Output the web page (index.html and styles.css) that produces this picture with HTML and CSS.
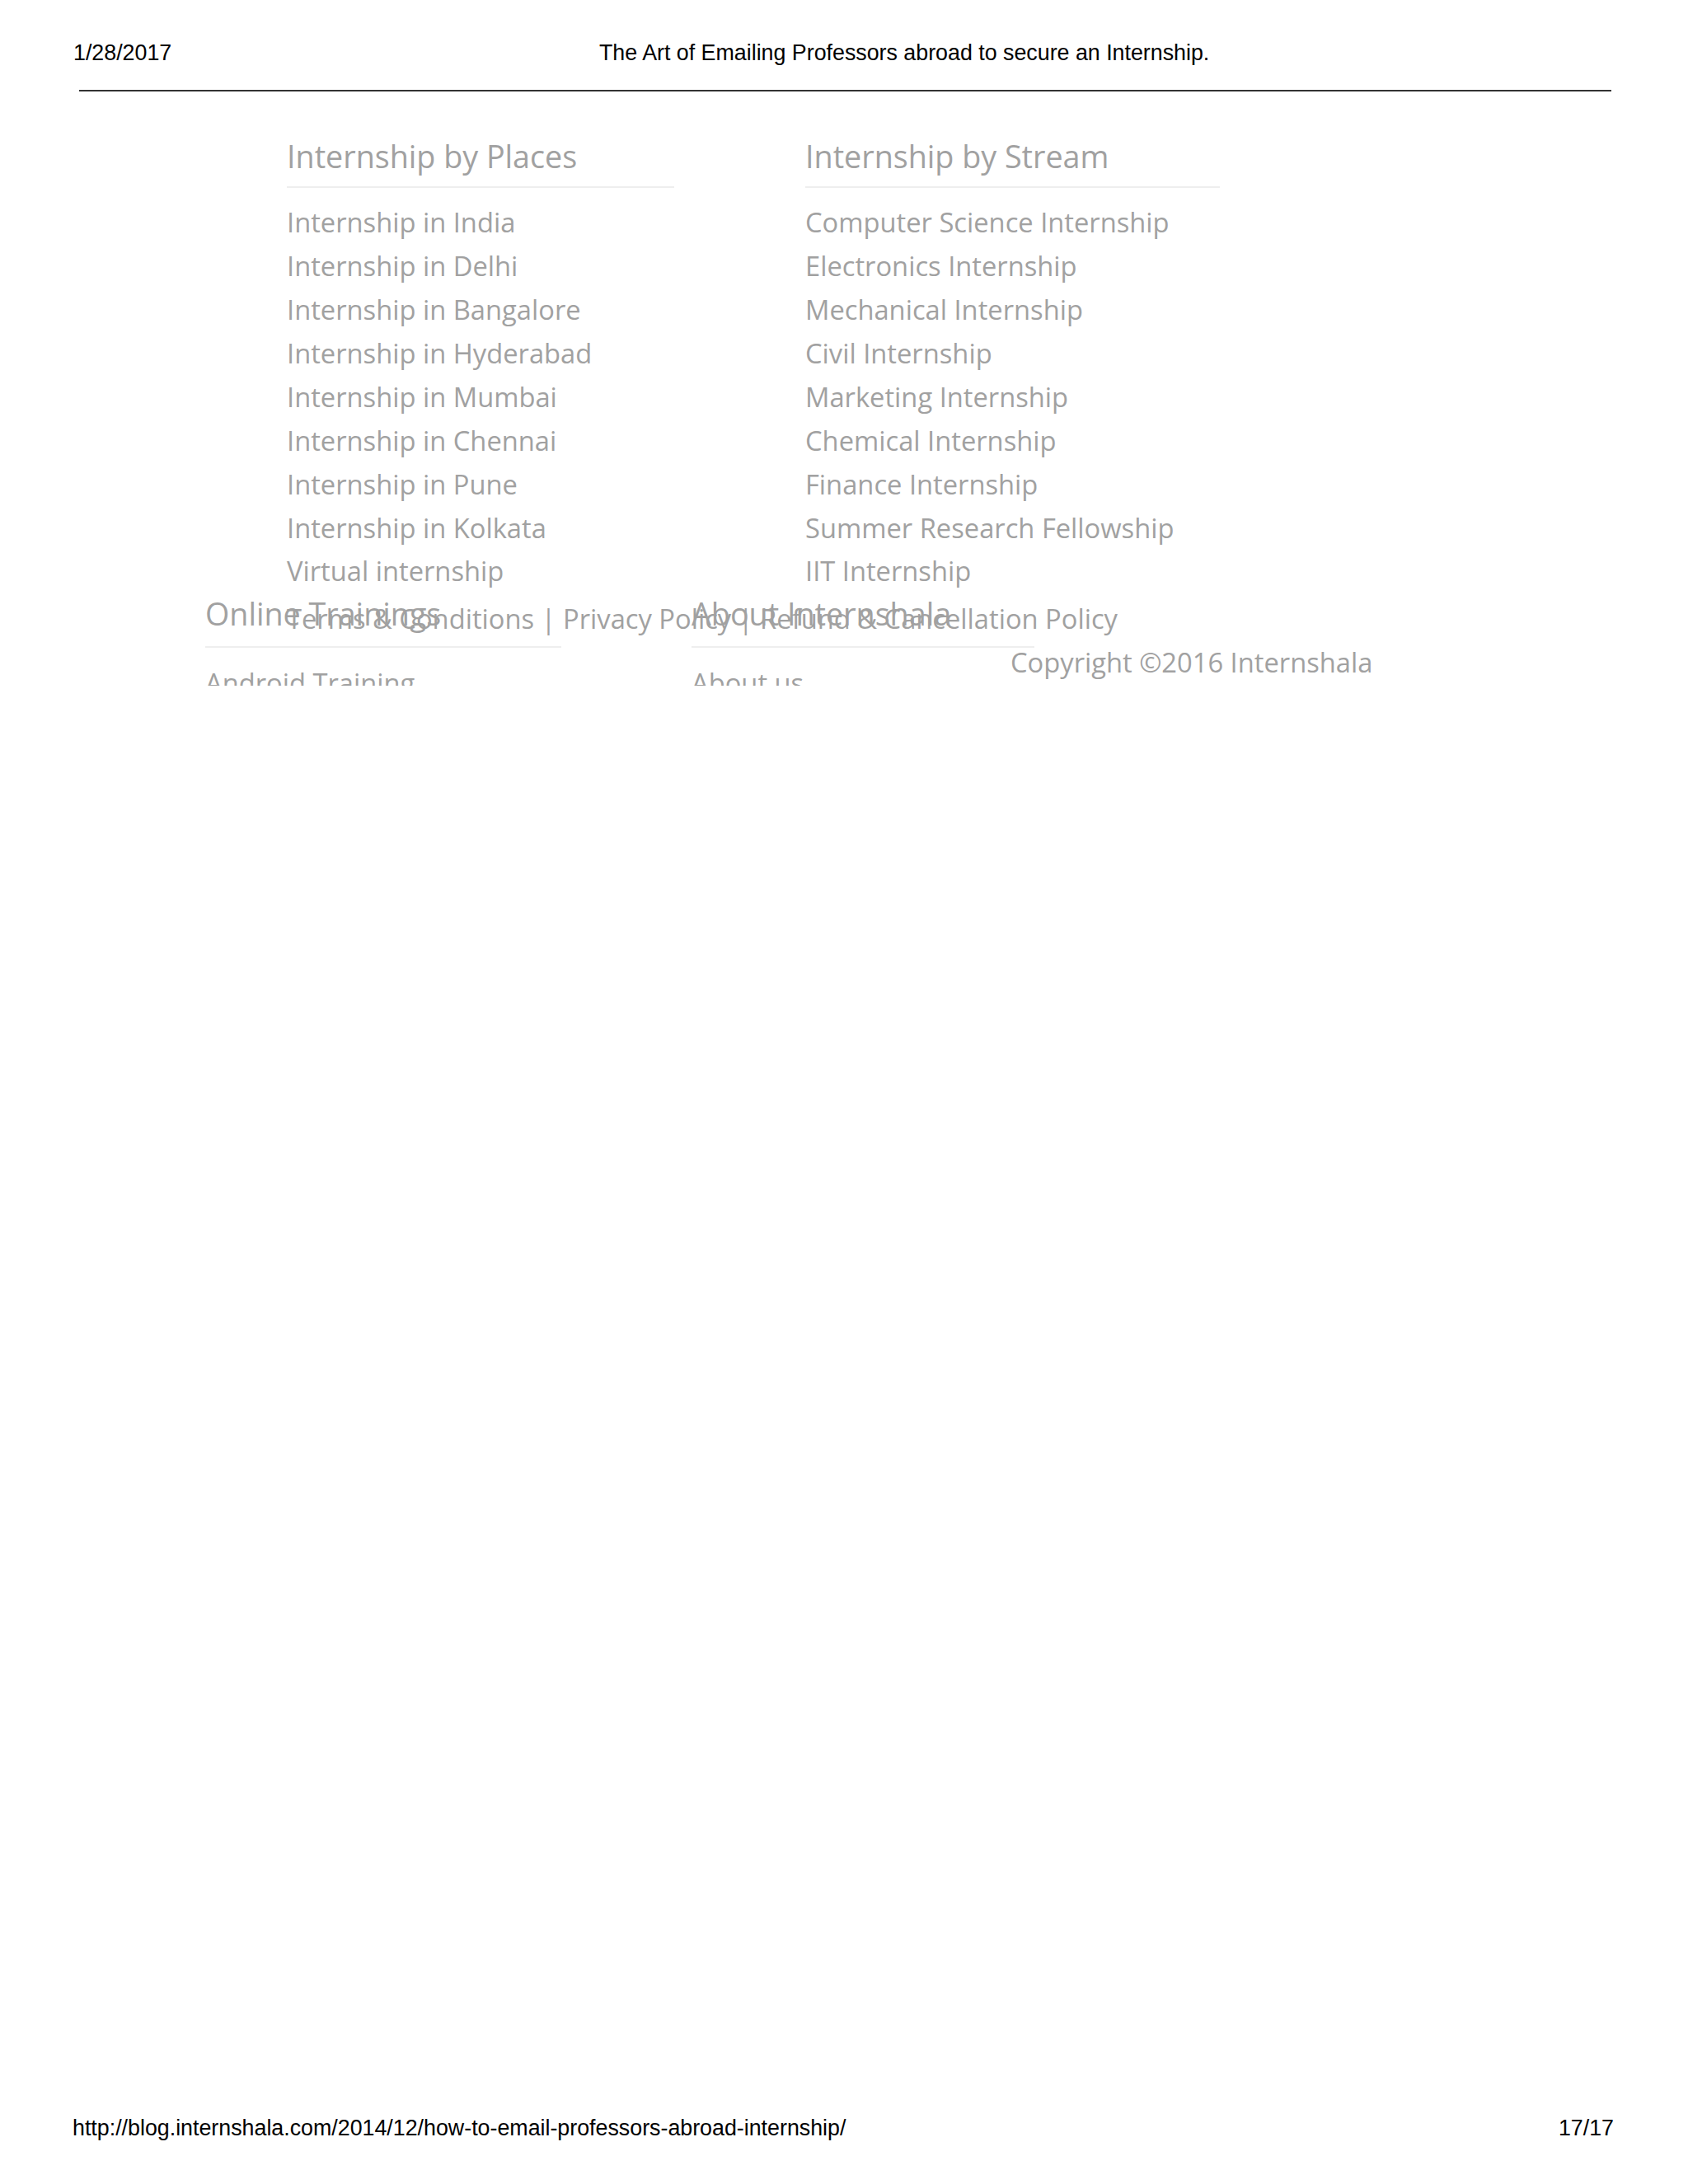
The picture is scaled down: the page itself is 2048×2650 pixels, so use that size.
FILE: index.html
```html
<!DOCTYPE html>
<html>
<head>
<meta charset="utf-8">
<title>The Art of Emailing Professors abroad to secure an Internship.</title>
<link rel="stylesheet" href="styles.css">
</head>
<body>
<div class="sheet">
  <header class="print-head">
    <span class="print-date">1/28/2017</span>
    <span class="print-title">The Art of Emailing Professors abroad to secure an Internship.</span>
  </header>
  <div class="print-rule"></div>

  <main class="clip">
    <section class="links-row row-a">
      <div class="col col-places">
        <h3 class="col-title">Internship by Places</h3>
        <ul class="link-list">
          <li>Internship in India</li>
          <li>Internship in Delhi</li>
          <li>Internship in Bangalore</li>
          <li>Internship in Hyderabad</li>
          <li>Internship in Mumbai</li>
          <li>Internship in Chennai</li>
          <li>Internship in Pune</li>
          <li>Internship in Kolkata</li>
          <li>Virtual internship</li>
        </ul>
      </div>
      <div class="col col-stream">
        <h3 class="col-title">Internship by Stream</h3>
        <ul class="link-list">
          <li>Computer Science Internship</li>
          <li>Electronics Internship</li>
          <li>Mechanical Internship</li>
          <li>Civil Internship</li>
          <li>Marketing Internship</li>
          <li>Chemical Internship</li>
          <li>Finance Internship</li>
          <li>Summer Research Fellowship</li>
          <li>IIT Internship</li>
        </ul>
      </div>
    </section>

    <section class="links-row row-b">
      <div class="col col-trainings">
        <h3 class="col-title">Online Trainings</h3>
        <ul class="link-list">
          <li>Android Training</li>
        </ul>
      </div>
      <div class="col col-about">
        <h3 class="col-title">About Internshala</h3>
        <ul class="link-list">
          <li>About us</li>
        </ul>
      </div>
    </section>

    <div class="legal">
      <div class="legal-links">Terms &amp; Conditions | Privacy Policy | Refund &amp; Cancellation Policy</div>
      <div class="copyright">Copyright ©2016 Internshala</div>
    </div>
  </main>

  <footer class="print-foot">
    <span class="print-url">http://blog.internshala.com/2014/12/how-to-email-professors-abroad-internship/</span>
    <span class="print-page">17/17</span>
  </footer>
</div>
</body>
</html>
```
FILE: styles.css
```css
html, body {
  margin: 0;
  padding: 0;
  background: #ffffff;
}

.sheet {
  width: 2048px;
  height: 2650px;
  display: flex;
  flex-direction: column;
  box-sizing: border-box;
}

/* print header */
.print-head {
  display: flex;
  align-items: baseline;
  padding: 51px 0 0 89px;
  font-family: "Liberation Sans", Arial, sans-serif;
  font-size: 26.8px;
  line-height: 27px;
  color: #000;
}

.print-date {
  width: 638px;
}

.print-title {
  white-space: nowrap;
}

.print-rule {
  margin: 31px 93px 0 96px;
  height: 2px;
  background: #333;
}

/* content */
.clip {
  position: relative;
  height: 721px;
  overflow: hidden;
  font-family: "Open Sans", "Noto Sans", sans-serif;
  color: #a1a1a1;
}

.links-row {
  display: flex;
  padding-top: 56px;
}

.row-b {
  padding-top: 2px;
}

.col-title {
  margin: 0;
  font-weight: 400;
  font-size: 37.7px;
  line-height: 45.6px;
  padding-bottom: 13px;
  border-bottom: 2px solid #eeeeee;
  white-space: nowrap;
}

.row-b .col-title {
  padding-bottom: 16px;
}

.link-list {
  list-style: none;
  margin: 16.6px 0 0 0;
  padding: 0;
  font-size: 32.7px;
  line-height: 52.9px;
  white-space: nowrap;
}

.col-places {
  margin-left: 348px;
  width: 470px;
}

.col-stream {
  margin-left: 159px;
  width: 503px;
}

.col-trainings {
  margin-left: 249px;
  width: 432px;
}

.col-about {
  margin-left: 158px;
  width: 416px;
}

.legal {
  position: absolute;
  left: 348px;
  top: 614px;
  font-size: 32.7px;
  line-height: 52.9px;
  white-space: nowrap;
}

.copyright {
  padding-left: 878px;
}

/* print footer */
.print-foot {
  margin-top: auto;
  display: flex;
  justify-content: space-between;
  padding: 0 90px 54px 88px;
  font-family: "Liberation Sans", Arial, sans-serif;
  font-size: 26.8px;
  line-height: 27px;
  color: #000;
}
```
